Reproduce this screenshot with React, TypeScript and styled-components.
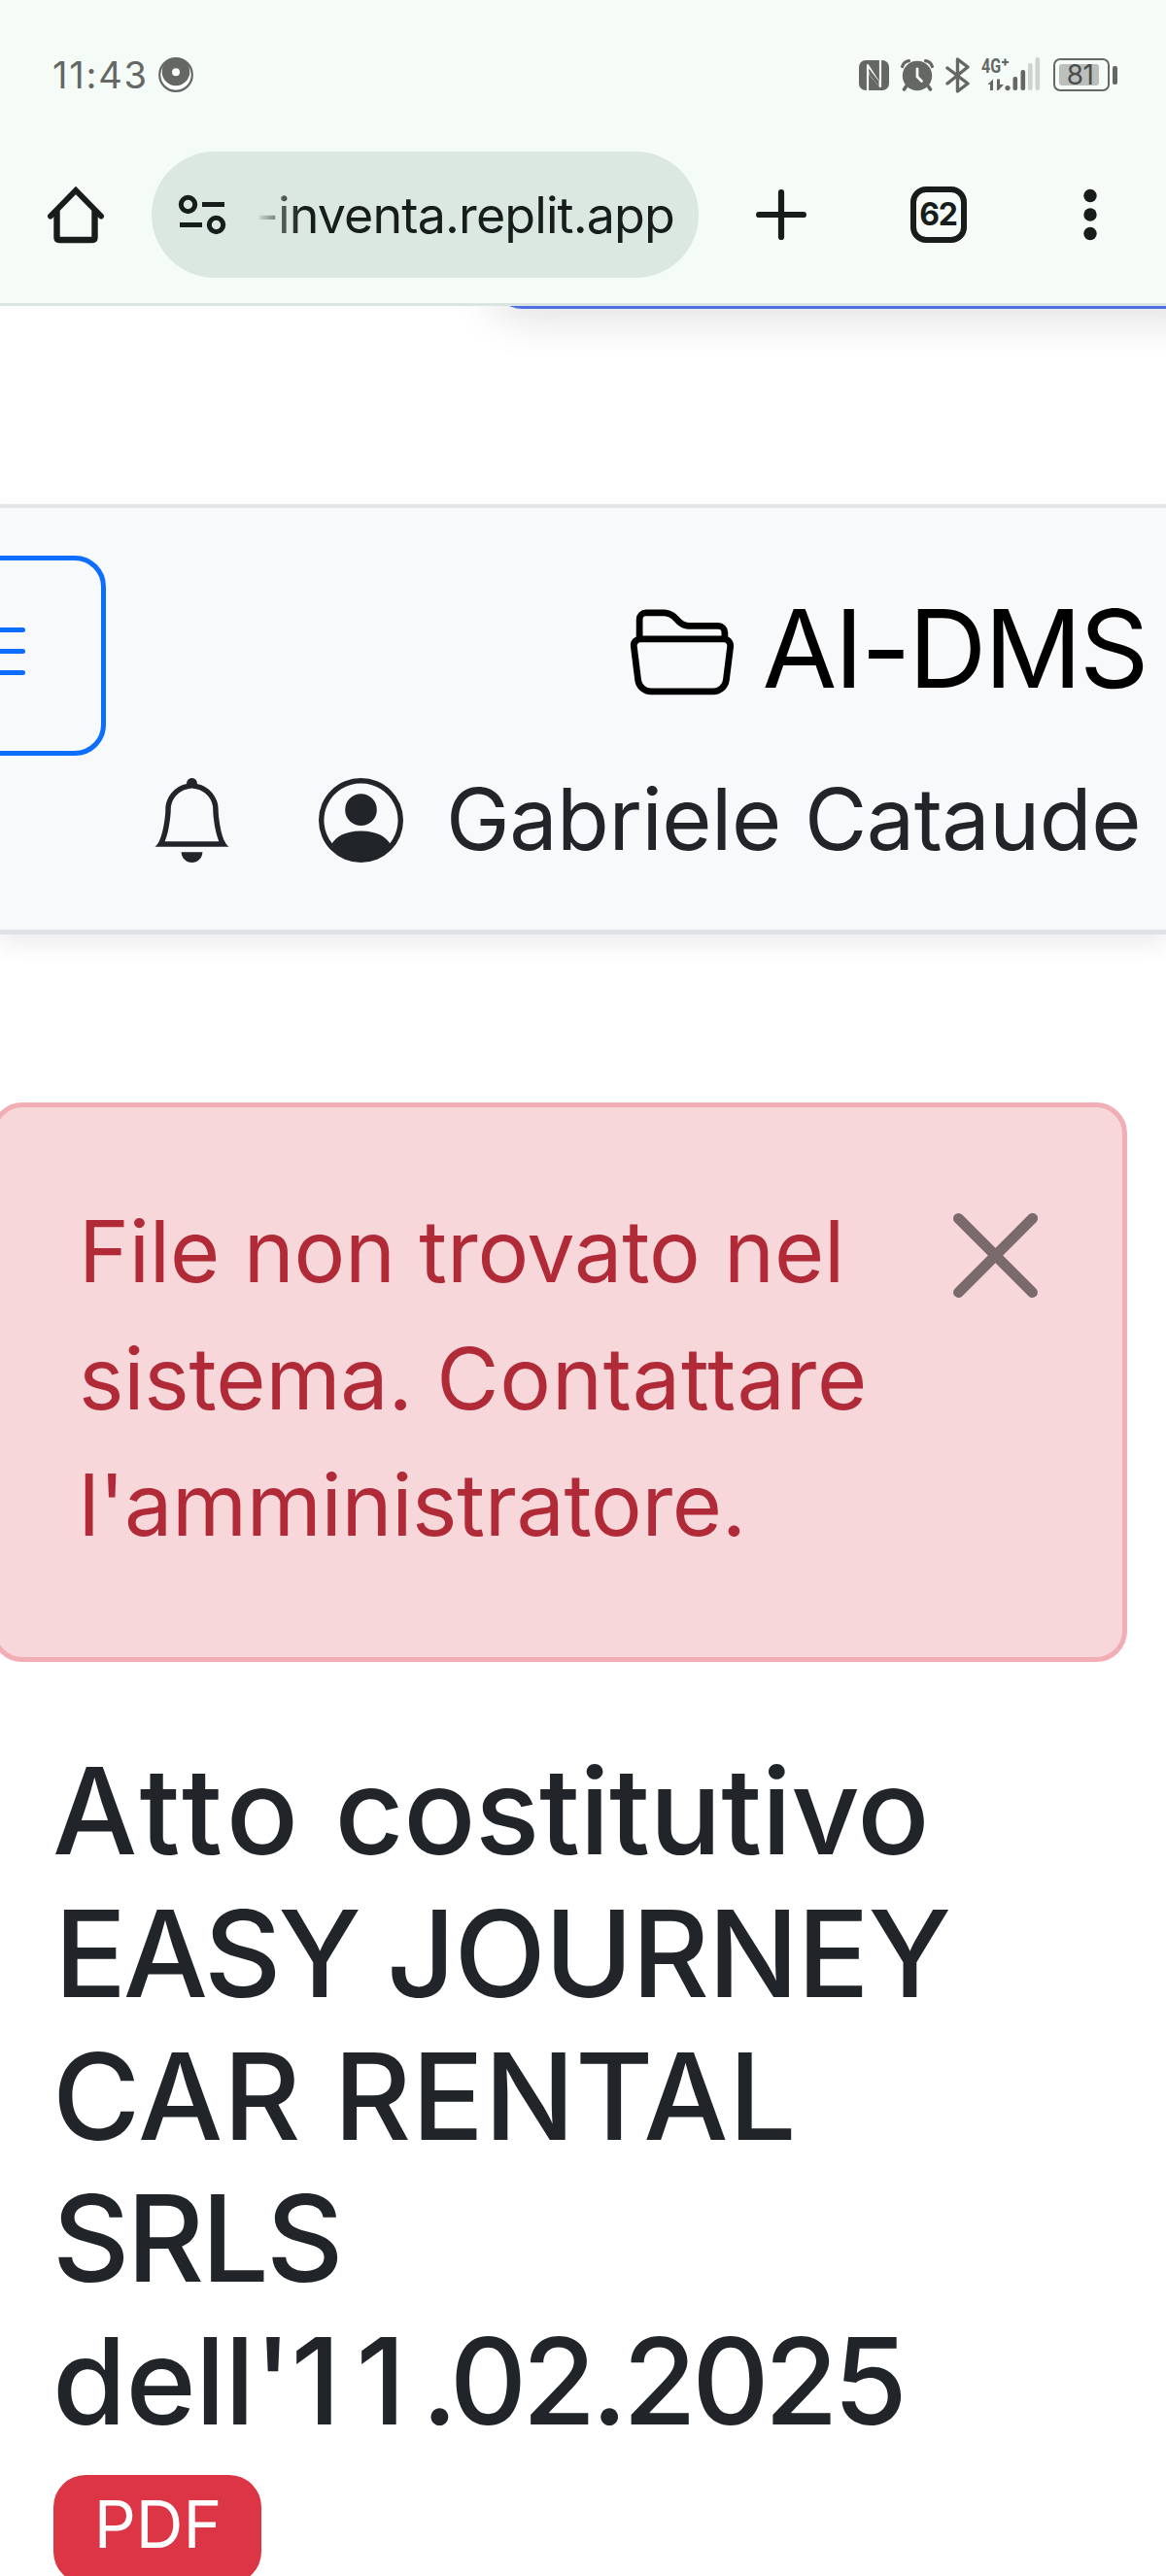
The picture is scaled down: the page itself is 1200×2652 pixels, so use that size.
import React from "react";
import styled, { createGlobalStyle } from "styled-components";
import { BsBell, BsFolder2Open, BsPersonCircle } from "react-icons/bs";

const GlobalStyle = createGlobalStyle`
  *, *::before, *::after { box-sizing: border-box; }
  body {
    margin: 0;
    background: #fff;
    color: #212529;
    font-family: "Inter", "Liberation Sans", sans-serif;
  }
`;

const INK = "#171d1a";
const STATUS = "#646763";

const Screen = styled.div`
  width: 1200px;
  height: 2652px;
  overflow: hidden;
  display: flex;
  flex-direction: column;
`;

/* ---------- Browser chrome ---------- */

const Chrome = styled.header`
  flex: none;
  height: 315px;
  background: #f5fbf7;
  border-bottom: 3px solid #dae5df;
`;

const StatusBar = styled.div`
  height: 156px;
  padding: 57px 50px 59px 54px;
  display: flex;
  align-items: center;
  justify-content: space-between;
  color: ${STATUS};
`;

const StatusGroup = styled.div<{ $gap: number }>`
  display: flex;
  align-items: center;
  gap: ${(p) => p.$gap}px;
`;

const Clock = styled.span`
  width: 98px;
  font-size: 38px;
  line-height: 40px;
  letter-spacing: 1.8px;
  white-space: nowrap;
`;

const Battery = styled.div`
  display: flex;
  align-items: center;
  gap: 3px;
  margin-left: 1px;

  &::after {
    content: "";
    width: 5px;
    height: 19px;
    border-radius: 2px;
    background: ${STATUS};
  }
`;

const BatteryBody = styled.div`
  width: 58px;
  height: 34px;
  padding: 3.5px;
  border: 2.5px solid ${STATUS};
  border-radius: 7px;
`;

const BatteryLevel = styled.div`
  width: 41px;
  height: 22px;
  border-radius: 3px;
  background: #bcc0bd;
  color: #4a4d4a;
  font-size: 28px;
  line-height: 23px;
  letter-spacing: -0.5px;
  text-align: center;
  padding-left: 3px;
`;

const Toolbar = styled.div`
  height: 130px;
  display: flex;
  align-items: center;
`;

const HomeSlot = styled.div`
  width: 156px;
  padding-left: 48px;
  display: flex;
`;

const AddressPill = styled.div`
  width: 563px;
  height: 130px;
  border-radius: 65px;
  background: #dae8e1;
  padding-left: 27px;
  display: flex;
  align-items: center;
`;

const Url = styled.span`
  margin-left: 30px;
  padding-top: 2px;
  font-size: 52px;
  line-height: 64px;
  letter-spacing: -0.9px;
  font-weight: 400;
  white-space: nowrap;
  color: transparent;
  background: linear-gradient(90deg, #dae8e1 0, #4d5551 30px, ${INK} 48px);
  background-clip: text;
  -webkit-background-clip: text;
`;

const Actions = styled.div`
  flex: 1;
  display: flex;
  align-items: center;
  padding: 0 71px 0 59px;
`;

const TabCount = styled.div`
  width: 58px;
  height: 58px;
  margin: 0 auto 0 107px;
  border: 6px solid ${INK};
  border-radius: 16px;
  color: ${INK};
  font-size: 32px;
  font-weight: 700;
  line-height: 46px;
  letter-spacing: -1.2px;
  text-indent: -1px;
  text-align: center;
`;

/* ---------- Page ---------- */

const ScrolledStrip = styled.div`
  flex: none;
  height: 204px;
  overflow: hidden;
  padding-left: 505px;
`;

const PreviousButton = styled.div`
  width: 760px;
  height: 103px;
  margin-top: -100px;
  border-radius: 33px;
  background: #4f6fe3;
  box-shadow: 0 11px 46px rgba(0, 0, 0, 0.12);
`;

const Navbar = styled.nav`
  flex: none;
  height: 443px;
  padding-top: 49px;
  background: #f8f9fb;
  border-top: 4px solid #e5e5e5;
  border-bottom: 5px solid #dee2e6;
  box-shadow: 0 11px 22px rgba(0, 0, 0, 0.075);
`;

const BrandRow = styled.div`
  height: 206px;
  display: flex;
  justify-content: space-between;
`;

const MenuButton = styled.button`
  width: 174px;
  height: 206px;
  margin: 0 0 0 -65px;
  padding: 0 58px 9px 0;
  border: 5px solid #0d6efd;
  border-radius: 32px;
  background: transparent;
  color: #0d6efd;
  display: flex;
  flex-direction: column;
  align-items: center;
  justify-content: center;
  gap: 17px;
`;

const MenuLine = styled.span`
  width: 66px;
  height: 5px;
  border-radius: 3px;
  background: currentColor;
`;

const Brand = styled.div`
  padding: 0 20px 15px 0;
  display: flex;
  align-items: center;
  color: #000;
  font-size: 111.4px;
  line-height: 167px;
  letter-spacing: -2.5px;

  svg {
    width: 108px;
    height: 108px;
    margin: 1px 29px 0 0;
  }
`;

const UserRow = styled.div`
  height: 130px;
  padding-left: 154px;
  display: flex;
  align-items: center;

  svg {
    width: 87px;
    height: 87px;
    margin-top: 2px;
  }

  svg + svg {
    margin-left: 87px;
  }
`;

const UserName = styled.span`
  margin-left: 44px;
  font-size: 88px;
  line-height: 130px;
  letter-spacing: -0.5px;
  white-space: nowrap;
`;

const Alert = styled.section`
  flex: none;
  width: 1169px;
  height: 576px;
  margin: 173px 0 0 -9px;
  padding: 83px 87px 0 85px;
  border: 5px solid #f1aeb5;
  border-radius: 32px;
  background: #f8d7da;
  color: #b02a37;
  display: flex;
  justify-content: space-between;
`;

const AlertText = styled.p`
  margin: 0;
  font-size: 88px;
  line-height: 130.5px;
`;

const Line = styled.span<{ $indent?: number }>`
  display: block;
  white-space: nowrap;
  margin-left: ${(p) => p.$indent ?? 0}px;
`;

const Word = styled.span<{ $tracking: number }>`
  letter-spacing: ${(p) => p.$tracking}px;
`;

const CloseIcon = styled.svg`
  width: 87px;
  height: 87px;
  margin-top: 26px;
  fill: #000;
  opacity: 0.5;
`;

const Title = styled.h1`
  flex: none;
  margin: 81px 0 0 54px;
  font-size: 123.1px;
  font-weight: 500;
  line-height: 146.8px;
`;

const Badge = styled.span`
  flex: none;
  width: 214px;
  height: 112px;
  margin: 22px 0 0 55px;
  border-radius: 33px;
  background: #dc3545;
  color: #fff;
  font-size: 67.5px;
  line-height: 102px;
  text-align: center;
  padding-left: 1px;
`;

function ChromeDotIcon() {
  return (
    <svg width="36" height="36" viewBox="0 0 36 36">
      <circle cx="18" cy="18" r="16.8" fill="#fff" stroke={STATUS} strokeWidth="2.2" />
      <circle cx="18" cy="15" r="14.3" fill={STATUS} />
      <circle cx="18" cy="15.2" r="4" fill="#fff" />
    </svg>
  );
}

function NfcIcon() {
  return (
    <svg width="31" height="31" viewBox="0 0 31 31">
      <rect width="31" height="31" rx="7" fill={STATUS} />
      <path
        d="M9 31V5L21.5 24.5M9.5 12L22 27V0"
        fill="none"
        stroke="#f5fbf7"
        strokeWidth="2.2"
        strokeLinejoin="round"
      />
      <path d="M10.5 9V14.5L20.5 27V21.8Z" fill={STATUS} />
    </svg>
  );
}

function AlarmIcon() {
  return (
    <svg width="34" height="33" viewBox="0 0 34 33" fill="none" stroke={STATUS} strokeLinecap="round">
      <circle cx="17" cy="17" r="15.2" fill={STATUS} stroke="none" />
      <path d="M1.6 7.5C2.6 4 5 2 8.5 1.6M32.4 7.5C31.4 4 29 2 25.5 1.6" strokeWidth="3.2" />
      <path d="M5.5 28L3.5 31M28.5 28L30.5 31" strokeWidth="3.6" />
      <path d="M17 10V18L21.5 22.5" stroke="#f5fbf7" strokeWidth="2.8" />
    </svg>
  );
}

function BluetoothIcon() {
  return (
    <svg width="25" height="37" viewBox="0 0 25 37" fill="none" stroke={STATUS} strokeWidth="3.4" strokeLinejoin="round" strokeLinecap="round">
      <path d="M2 11L23 27L12.5 35V2L23 10L2 27" />
    </svg>
  );
}

const SignalSvg = styled.svg`
  overflow: visible;
`;

function SignalIcon() {
  return (
    <SignalSvg width="61" height="36" viewBox="0 0 61 36" fill={STATUS}>
      <text transform="translate(0 16) scale(0.8 1)" fontFamily="Roboto, sans-serif" fontWeight="700" fontSize="20">
        4G
      </text>
      <path d="M21 5H28M24.5 1.5V8.5" stroke={STATUS} strokeWidth="2.2" />
      <path d="M6.5 28L12 22.5V34H9V28ZM16 22.5H19V28H23L17.5 34H16Z" />
      <circle cx="27" cy="31.6" r="2.6" />
      <rect x="32.5" y="20" width="4.6" height="14" rx="2" />
      <rect x="40.5" y="13" width="4.6" height="21" rx="2" />
      <rect x="48" y="6" width="4.6" height="28" rx="2" fill="#cfd3cf" />
      <rect x="55.5" y="0" width="4.6" height="34" rx="2" fill="#cfd3cf" />
    </SignalSvg>
  );
}

function HomeIcon() {
  return (
    <svg width="60" height="60" viewBox="0 0 60 60" fill="none" stroke={INK} strokeWidth="6.4" strokeLinejoin="round" strokeLinecap="round">
      <path d="M4 31.5L30 5L56 31.5" strokeLinejoin="miter" strokeWidth="6" />
      <path d="M10.5 27V53.5Q10.5 56 13 56H47Q49.5 56 49.5 53.5V27" />
    </svg>
  );
}

function TuneIcon() {
  return (
    <svg width="50" height="42" viewBox="0 0 50 42" fill="none" stroke={INK} strokeWidth="5">
      <circle cx="10.5" cy="10.5" r="7.2" />
      <circle cx="39.5" cy="31.5" r="7.2" />
      <path d="M25 10.5H48M2 31.5H25" />
    </svg>
  );
}

function PlusIcon() {
  return (
    <svg width="52" height="52" viewBox="0 0 52 52" stroke={INK} strokeWidth="6.2" strokeLinecap="round">
      <path d="M3.1 26H48.9M26 3.1V48.9" />
    </svg>
  );
}

function MoreIcon() {
  return (
    <svg width="14" height="54" viewBox="0 0 14 54" fill={INK}>
      <circle cx="7" cy="7.5" r="6.7" />
      <circle cx="7" cy="27" r="6.7" />
      <circle cx="7" cy="46.5" r="6.7" />
    </svg>
  );
}

export default function App() {
  return (
    <Screen>
      <GlobalStyle />
      <Chrome>
        <StatusBar>
          <StatusGroup $gap={11}>
            <Clock>11:43</Clock>
            <ChromeDotIcon />
          </StatusGroup>
          <StatusGroup $gap={12}>
            <NfcIcon />
            <AlarmIcon />
            <BluetoothIcon />
            <SignalIcon />
            <Battery>
              <BatteryBody>
                <BatteryLevel>81</BatteryLevel>
              </BatteryBody>
            </Battery>
          </StatusGroup>
        </StatusBar>
        <Toolbar>
          <HomeSlot>
            <HomeIcon />
          </HomeSlot>
          <AddressPill>
            <TuneIcon />
            <Url>-inventa.replit.app</Url>
          </AddressPill>
          <Actions>
            <PlusIcon />
            <TabCount>62</TabCount>
            <MoreIcon />
          </Actions>
        </Toolbar>
      </Chrome>

      <ScrolledStrip>
        <PreviousButton />
      </ScrolledStrip>

      <Navbar>
        <BrandRow>
          <MenuButton aria-label="Menu">
            <MenuLine />
            <MenuLine />
            <MenuLine />
          </MenuButton>
          <Brand>
            <BsFolder2Open />
            AI-DMS
          </Brand>
        </BrandRow>
        <UserRow>
          <BsBell />
          <BsPersonCircle />
          <UserName>Gabriele Cataude</UserName>
        </UserRow>
      </Navbar>

      <Alert>
        <AlertText>
          <Line>
            <Word $tracking={-0.2}>File non trovato nel</Word>
          </Line>
          <Line>
            <Word $tracking={-0.2}>sistema. </Word>
            <Word $tracking={0.8}>Contattare</Word>
          </Line>
          <Line>
            <Word $tracking={-0.35}>l'amministratore.</Word>
          </Line>
        </AlertText>
        <CloseIcon viewBox="0 0 16 16">
          <path d="M.293.293a1 1 0 0 1 1.414 0L8 6.586 14.293.293a1 1 0 1 1 1.414 1.414L9.414 8l6.293 6.293a1 1 0 0 1-1.414 1.414L8 9.414l-6.293 6.293a1 1 0 0 1-1.414-1.414L6.586 8 .293 1.707a1 1 0 0 1 0-1.414z" />
        </CloseIcon>
      </Alert>

      <Title>
        <Line>
          <Word $tracking={5}>Atto</Word>
          <Word $tracking={-0.4}> costitutivo</Word>
        </Line>
        <Line $indent={2}>
          <Word $tracking={-3.4}>EASY </Word>
          <Word $tracking={-1.3}>JOURNEY</Word>
        </Line>
        <Line>
          <Word $tracking={0.5}>CAR RENTAL</Word>
        </Line>
        <Line>
          <Word $tracking={-3}>SRLS</Word>
        </Line>
        <Line>
          <Word $tracking={-0.7}>dell'</Word>
          <Word $tracking={16}>11</Word>
          <Word $tracking={-4.8}>.02.2025</Word>
        </Line>
      </Title>
      <Badge>PDF</Badge>
    </Screen>
  );
}
